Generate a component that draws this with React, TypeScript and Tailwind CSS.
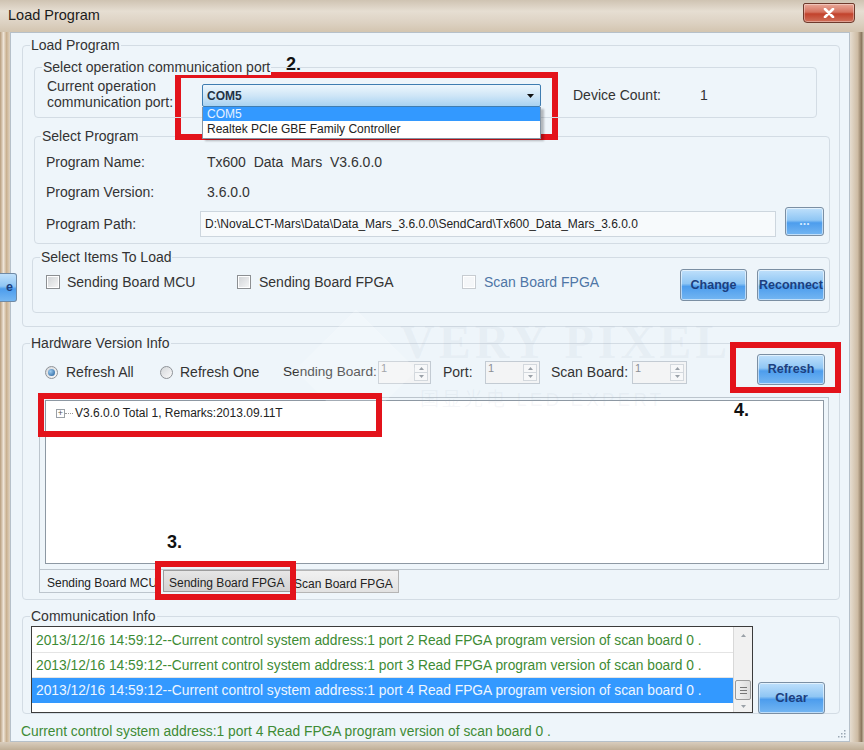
import React from "react";

/* Win7-style "Load Program" dialog with red annotation boxes. */

function GroupBox({
  label,
  className = "",
  labelLeft = "left-[7px]",
  children,
}: {
  label: string;
  className?: string;
  labelLeft?: string;
  children?: React.ReactNode;
}) {
  return (
    <div className={`relative shrink-0 rounded-[4px] border border-[#d3dce4] ${className}`}>
      <span
        className={`absolute -top-[9px] ${labelLeft} whitespace-nowrap bg-[#eef5fa] px-[1px] text-[14px] leading-[16px] text-[#333]`}
      >
        {label}
      </span>
      {children}
    </div>
  );
}

function CheckBox({ disabled }: { disabled?: boolean }) {
  return (
    <span
      className={`inline-block h-[14px] w-[14px] shrink-0 border shadow-[inset_0_0_0_1px_#fff] ${
        disabled
          ? "border-[#c7ccd1] bg-[#f5f7f9]"
          : "border-[#8c8f92] bg-[linear-gradient(135deg,#cfd2d5,#f8f8f8)]"
      }`}
    />
  );
}

function Radio({ checked }: { checked?: boolean }) {
  return (
    <span className="inline-flex h-[13px] w-[13px] shrink-0 items-center justify-center rounded-full border border-[#8e9297] bg-[linear-gradient(135deg,#d4d7da,#fafafa)]">
      {checked && (
        <span className="h-[7px] w-[7px] rounded-full bg-[radial-gradient(circle_at_35%_35%,#9ccbf0,#1d5a96)]" />
      )}
    </span>
  );
}

function Tri({ up }: { up?: boolean }) {
  return (
    <svg width="5" height="3" viewBox="0 0 5 3">
      <path d={up ? "M0 3 L2.5 0 L5 3 Z" : "M0 0 L5 0 L2.5 3 Z"} fill="#9aa1a8" />
    </svg>
  );
}

function SpinBox({ className = "" }: { className?: string }) {
  return (
    <div className={`flex h-[23px] shrink-0 border border-[#c3cbd3] bg-[#f3f4f5] ${className}`}>
      <span className="flex-1 pl-[2px] text-[11px] leading-[13px] text-[#8b9095]">1</span>
      <span className="my-[2px] mr-[2px] flex w-[14px] flex-col border border-[#d3d8dd] bg-[#f7f8f9]">
        <span className="flex flex-1 items-center justify-center border-b border-[#d3d8dd]">
          <Tri up />
        </span>
        <span className="flex flex-1 items-center justify-center">
          <Tri />
        </span>
      </span>
    </div>
  );
}

function BlueBtn({
  children,
  className = "",
}: {
  children?: React.ReactNode;
  className?: string;
}) {
  return (
    <div
      className={`flex shrink-0 items-center justify-center rounded-[3px] border border-[#7b8fa3] bg-[linear-gradient(to_bottom,#bfe0fb_0%,#8fc6f4_45%,#4d9ded_55%,#74b6f2_100%)] text-[12.5px] font-bold text-[#1c3f7f] shadow-[inset_0_0_0_1px_rgba(255,255,255,0.55)] ${className}`}
    >
      {children}
    </div>
  );
}

const LOG_ROWS = [
  "2013/12/16 14:59:12--Current control system address:1 port 2 Read FPGA program version of scan board 0 .",
  "2013/12/16 14:59:12--Current control system address:1 port 3 Read FPGA program version of scan board 0 .",
  "2013/12/16 14:59:12--Current control system address:1 port 4 Read FPGA program version of scan board 0 .",
];

export default function App() {
  return (
    <div className="relative h-[750px] w-[864px] overflow-hidden bg-[#d6c9b6] font-['Liberation_Sans',Arial,sans-serif]">
      {/* Title bar */}
      <div className="flex h-[32px] items-center justify-between bg-[linear-gradient(to_bottom,#cfc3b2,#e6ded2_35%,#ddd2c3_70%,#d3c5b0)] pl-[8px] pr-[9px]">
        <span className="text-[14.5px] text-[#1b1b1b]">Load Program</span>
        <div className="mb-[6px] flex h-[20px] w-[52px] items-center justify-center rounded-[4px] rounded-t-[2px] border border-[#6e3a2c] bg-[linear-gradient(to_bottom,#e9a999_0%,#d5725f_45%,#c2422c_55%,#d0705a_100%)] shadow-[inset_0_0_0_1px_rgba(255,255,255,0.35)]">
          <svg width="12" height="10" viewBox="0 0 12 10">
            <path d="M2 1 L10 9 M10 1 L2 9" stroke="#fff" strokeWidth="2.6" strokeLinecap="round" />
          </svg>
        </div>
      </div>

      <div className="flex h-[710px]">
        {/* left frame */}
        <div className="w-[10px] bg-[linear-gradient(to_right,#b69c7c,#eee4d7_35%,#c9b191_65%,#dfd2c0)]" />

        {/* client area */}
        <div className="relative flex w-[840px] flex-col border border-[#b6c0c9] bg-[#eef5fa] pl-[11px] pt-[12px] text-[#333]">
          {/* Load Program */}
          <GroupBox label="Load Program" className="h-[282px] w-[818px] pl-[11px] pt-[21px]">
            {/* Select operation communication port */}
            <GroupBox
              label="Select operation communication port"
              className="z-10 flex h-[51px] w-[783px] items-center pt-[6px]"
            >
              <div className="-mt-[4px] ml-[12px] w-[155px] shrink-0 text-[14px] leading-[16px]">
                <div>Current operation</div>
                <div>communication port:</div>
              </div>
              <div className="relative h-[23px] w-[339px] shrink-0">
                <div className="flex h-full items-center justify-between rounded-[2px] border border-[#3f7db1] bg-[linear-gradient(to_bottom,#eef7fd,#cfe6f7_50%,#a8d2f1)] pl-[4px] pr-[6px]">
                  <span className="text-[12px] font-bold text-[#1f3346]">COM5</span>
                  <svg width="7" height="4" viewBox="0 0 7 4">
                    <path d="M0 0 L7 0 L3.5 4 Z" fill="#111" />
                  </svg>
                </div>
                <div className="absolute left-0 top-full w-full border border-t-0 border-[#8595a5] bg-white shadow-[3px_2px_2px_rgba(0,0,0,0.25)]">
                  <div className="h-[14px] bg-[#3399ff] pl-[4px] text-[12px] leading-[14px] text-[#e6f1ff]">
                    COM5
                  </div>
                  <div className="h-[17px] pl-[4px] text-[12px] leading-[17px] text-[#222]">
                    Realtek PCIe GBE Family Controller
                  </div>
                </div>
              </div>
              <span className="ml-[32px] w-[127px] shrink-0 text-[14px]">Device Count:</span>
              <span className="text-[14px]">1</span>
            </GroupBox>

            {/* Select Program */}
            <GroupBox
              label="Select Program"
              labelLeft="left-[6px]"
              className="mt-[18px] flex h-[108px] w-[796px] flex-col pl-[11px] pt-[10px] text-[14px]"
            >
              <div className="flex h-[30px] items-center">
                <span className="w-[161px] shrink-0">Program Name:</span>
                <span className="whitespace-pre">Tx600  Data  Mars  V3.6.0.0</span>
              </div>
              <div className="flex h-[30px] items-center">
                <span className="w-[161px] shrink-0">Program Version:</span>
                <span>3.6.0.0</span>
              </div>
              <div className="flex h-[34px] items-center">
                <span className="w-[154px] shrink-0">Program Path:</span>
                <div className="flex h-[26px] w-[576px] shrink-0 items-center border border-[#cdd6de] bg-[#f7fafc] pl-[4px] text-[12px] text-[#222]">
                  D:\NovaLCT-Mars\Data\Data_Mars_3.6.0.0\SendCard\Tx600_Data_Mars_3.6.0.0
                </div>
                <BlueBtn className="mb-[5px] ml-[9px] h-[29px] w-[39px] text-[#d6ecff]">...</BlueBtn>
              </div>
            </GroupBox>

            {/* Select Items To Load */}
            <GroupBox
              label="Select Items To Load"
              className="-ml-[2px] mt-[13px] flex h-[56px] w-[798px] items-center pl-[13px] text-[14px]"
            >
              <div className="mb-[6px] flex w-[191px] shrink-0 items-center gap-[7px]">
                <CheckBox />
                <span>Sending Board MCU</span>
              </div>
              <div className="mb-[6px] flex w-[225px] shrink-0 items-center gap-[8px]">
                <CheckBox />
                <span>Sending Board FPGA</span>
              </div>
              <div className="mb-[6px] flex items-center gap-[8px]">
                <CheckBox disabled />
                <span className="text-[#4f76a6]">Scan Board FPGA</span>
              </div>
              <BlueBtn className="ml-auto h-[32px] w-[67px]">Change</BlueBtn>
              <BlueBtn className="ml-[10px] mr-[4px] h-[32px] w-[68px]">Reconnect</BlueBtn>
            </GroupBox>
          </GroupBox>

          {/* Hardware Version Info */}
          <GroupBox label="Hardware Version Info" className="mt-[16px] h-[257px] w-[818px]">
            <div className="mt-[10px] flex h-[31px] items-center whitespace-nowrap text-[14px]">
              <div className="ml-[22px] mt-[6px] flex w-[115px] shrink-0 items-center gap-[8px]">
                <Radio checked />
                <span>Refresh All</span>
              </div>
              <div className="mt-[6px] flex w-[123px] shrink-0 items-center gap-[7px]">
                <Radio />
                <span>Refresh One</span>
              </div>
              <span className="mt-[6px] w-[95px] shrink-0 text-[13.6px]">Sending Board:</span>
              <SpinBox className="mt-[6px] w-[53px]" />
              <span className="ml-[12px] mt-[6px] w-[42px] shrink-0">Port:</span>
              <SpinBox className="mt-[6px] w-[55px]" />
              <span className="ml-[11px] mt-[6px] w-[81px] shrink-0">Scan Board:</span>
              <SpinBox className="mt-[6px] w-[55px]" />
              <BlueBtn className="ml-auto mr-[14px] h-[31px] w-[68px]">Refresh</BlueBtn>
            </div>

            {/* tab panel */}
            <div className="ml-[16px] mt-[12px] h-[173px] w-[790px] border border-[#bcc5cd] pb-[5px] pl-[5px] pr-[4px] pt-[2px]">
              <div className="h-full border border-[#8d98a3] bg-white pl-[10px] pt-[4px]">
                <div className="flex h-[16px] items-center text-[12px] text-[#222]">
                  <span className="flex h-[9px] w-[9px] items-center justify-center border border-[#9aa0a6] text-[9px] leading-none text-[#555]">
                    +
                  </span>
                  <span className="mr-[2px] w-[8px] border-t border-dotted border-[#999]" />
                  <span>V3.6.0.0 Total 1, Remarks:2013.09.11T</span>
                </div>
              </div>
            </div>
            <div className="-mt-[1px] ml-[16px] flex items-start text-[12px] text-[#222]">
              <div className="h-[24px] w-[122px] border-x border-b border-[#bcc5cd] pl-[7px] pt-[5px]">
                Sending Board MCU
              </div>
              <div className="ml-[2px] mt-[1px] h-[22px] w-[128px] border border-[#9c9c9c] bg-[linear-gradient(to_bottom,#e6e6e6,#d2d2d2)] pl-[5px] pt-[3px]">
                Sending Board FPGA
              </div>
              <div className="mt-[1px] h-[23px] w-[108px] border border-l-0 border-[#b5b5b5] bg-[linear-gradient(to_bottom,#f1f1f1,#e2e2e2)] pl-[3px] pt-[4px]">
                Scan Board FPGA
              </div>
            </div>
          </GroupBox>

          {/* Communication Info */}
          <GroupBox
            label="Communication Info"
            className="mt-[16px] flex h-[98px] w-[818px] items-end pl-[8px]"
          >
            <div className="flex h-[87px] w-[722px] shrink-0 border border-[#3b3b3b] bg-white">
              <div className="flex-1 overflow-hidden pt-[1px] text-[13.8px] text-[#3e8b35]">
                {LOG_ROWS.map((row, i) => (
                  <div
                    key={i}
                    className={`h-[25px] whitespace-nowrap pl-[4px] leading-[25px] ${
                      i === 2 ? "bg-[#3399ff] text-[#eef6ff]" : "border-b border-[#e4e4e4]"
                    }`}
                  >
                    {row}
                  </div>
                ))}
              </div>
              <div className="flex w-[19px] flex-col border-l border-[#d8d8d8] bg-[#f1f1f1]">
                <div className="flex h-[17px] items-center justify-center">
                  <Tri up />
                </div>
                <div className="flex-1" />
                <div className="mx-[1px] flex h-[20px] flex-col items-center justify-center gap-[2px] rounded-[2px] border border-[#9a9a9a] bg-[linear-gradient(to_right,#f3f3f3,#dcdcdc)]">
                  <span className="h-px w-[7px] bg-[#777]" />
                  <span className="h-px w-[7px] bg-[#777]" />
                  <span className="h-px w-[7px] bg-[#777]" />
                </div>
                <div className="flex h-[12px] items-center justify-center">
                  <Tri />
                </div>
              </div>
            </div>
            <BlueBtn className="mb-[-1px] ml-[5px] h-[32px] w-[67px] text-[13px]">Clear</BlueBtn>
          </GroupBox>

          <div className="ml-[-1px] mt-[10px] whitespace-nowrap text-[13.8px] leading-[16px] text-[#3e8b35]">
            Current control system address:1 port 4 Read FPGA program version of scan board 0 .
          </div>

          {/* resize grip */}
          <svg className="absolute bottom-[3px] right-[3px]" width="9" height="9" viewBox="0 0 9 9">
            <g fill="#9aa7b3">
              <rect x="7" y="1" width="1.5" height="1.5" />
              <rect x="4" y="4" width="1.5" height="1.5" />
              <rect x="7" y="4" width="1.5" height="1.5" />
              <rect x="1" y="7" width="1.5" height="1.5" />
              <rect x="4" y="7" width="1.5" height="1.5" />
              <rect x="7" y="7" width="1.5" height="1.5" />
            </g>
          </svg>
        </div>

        {/* right frame */}
        <div className="w-[14px] bg-[linear-gradient(to_right,#e6ddd0,#cdbba3_55%,#8c7860_82%,#d4c7b5)]" />
      </div>
      <div className="h-[8px] bg-[linear-gradient(to_bottom,#d9cdbd,#bfae96)]" />

      {/* partially visible button behind frame */}
      <div className="absolute left-0 top-[273px] flex h-[29px] w-[17px] items-center justify-end rounded-r-[3px] border border-l-0 border-[#6f8aa5] bg-[linear-gradient(to_bottom,#bfe0fb,#8fc6f4_45%,#4d9ded_55%,#74b6f2)] pr-[3px] text-[12.5px] font-bold text-[#1c3f7f]">
        e
      </div>

      {/* watermark */}
      <div className="pointer-events-none absolute left-[313px] top-[327px] h-[86px] w-[86px] rotate-45 bg-white/20" />
      <div className="pointer-events-none absolute left-[400px] top-[318px] font-['Liberation_Serif',serif] text-[48px] font-bold leading-none tracking-[4px] text-[#9fb0c0]/10">
        VERY PIXEL
      </div>
      <div className="pointer-events-none absolute left-[420px] top-[390px] font-['Liberation_Sans','Noto_Sans_CJK_SC',sans-serif] text-[19px] leading-none tracking-[3px] text-[#9fb0c0]/10">
        国显光电 LED EXPERT
      </div>

      {/* annotations */}
      <div className="pointer-events-none absolute left-[175px] top-[72px] h-[68px] w-[383px] border-[6px] border-[#e3131b]" />
      <div className="pointer-events-none absolute left-[38px] top-[393px] h-[44px] w-[344px] border-[6px] border-[#e3131b]" />
      <div className="pointer-events-none absolute left-[155px] top-[561px] h-[39px] w-[141px] border-[6px] border-[#e3131b]" />
      <div className="pointer-events-none absolute left-[730px] top-[342px] h-[51px] w-[111px] border-[6px] border-[#e3131b]" />
      <span className="absolute left-[286px] top-[55px] text-[18px] font-bold leading-none text-[#111]">2.</span>
      <span className="absolute left-[167px] top-[533px] text-[18px] font-bold leading-none text-[#111]">3.</span>
      <span className="absolute left-[734px] top-[401px] text-[18px] font-bold leading-none text-[#111]">4.</span>
    </div>
  );
}
